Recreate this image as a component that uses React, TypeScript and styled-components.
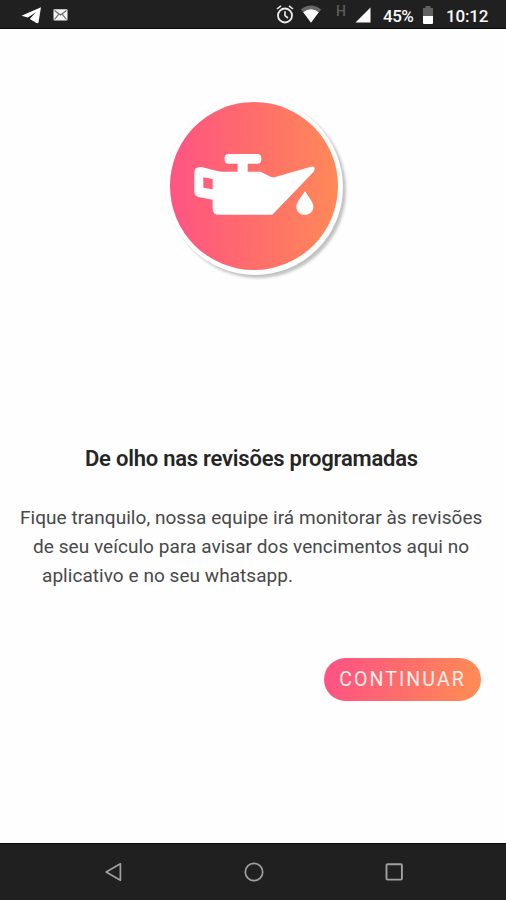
import React from "react";
import styled, { createGlobalStyle } from "styled-components";

const GlobalStyle = createGlobalStyle`
  * { box-sizing: border-box; }
  body { margin: 0; background: #fefefe; font-family: Roboto, "Liberation Sans", sans-serif; }
`;

const Screen = styled.div`
  display: flex;
  flex-direction: column;
  width: 506px;
  height: 900px;
  overflow: hidden;
  background: #fefefe;
`;

const StatusBar = styled.header`
  display: flex;
  flex: none;
  align-items: flex-start;
  justify-content: space-between;
  height: 29px;
  padding: 0 17px 0 21px;
  background: #202020;
  border-bottom: 1px solid #0b0b0b;
  color: #fafafa;
`;

const StatusGroup = styled.div`
  display: flex;
  align-items: flex-start;
`;

const StatusIcon = styled.svg<{ $left?: number }>`
  display: block;
  flex: none;
  margin-left: ${({ $left = 0 }) => $left}px;
`;

const StatusText = styled.span<{ $left: number; $width: number; $spacing?: number }>`
  width: ${({ $width }) => $width}px;
  margin-left: ${({ $left }) => $left}px;
  padding-top: 5px;
  font-size: 17px;
  font-weight: 500;
  line-height: 22px;
  letter-spacing: ${({ $spacing = 0 }) => $spacing}px;
  white-space: nowrap;
`;

const NetworkType = styled.span`
  width: 10px;
  margin-left: 14px;
  padding-top: 3px;
  font-size: 14px;
  font-weight: 500;
  line-height: 16px;
  color: #5c5c5c;
`;

const Content = styled.main`
  display: flex;
  flex: 1;
  flex-direction: column;
  align-items: center;
`;

const Badge = styled.div`
  width: 176px;
  height: 176px;
  margin: 69px 0 0 2px;
  padding: 4px;
  border-radius: 50%;
  background: #fff;
  box-shadow: 1px 1px 0 #fff, 4px 4px 3px rgba(0, 0, 0, 0.24), 0 0 3px rgba(0, 0, 0, 0.05);
`;

const BadgeFace = styled.div`
  width: 168px;
  height: 168px;
  border-radius: 50%;
  background: linear-gradient(90deg, #ff5484 0%, #ff6d6b 50%, #ff8957 100%);
`;

const Title = styled.h1`
  width: 333px;
  margin: 170px 0 0 -3px;
  font-size: 22px;
  font-weight: 600;
  line-height: 30px;
  letter-spacing: -0.23px;
  color: #252525;
  white-space: nowrap;
`;

const Message = styled.p`
  align-self: stretch;
  margin: 29px 0 0;
  font-size: 19px;
  line-height: 29px;
  color: #484848;
  white-space: nowrap;
`;

const Line = styled.span<{ $indent: number; $spacing?: number }>`
  display: block;
  padding-left: ${({ $indent }) => $indent}px;
  letter-spacing: ${({ $spacing = 0.05 }) => $spacing}px;
`;

const ContinueButton = styled.button`
  align-self: flex-end;
  width: 157px;
  height: 43px;
  margin: 68px 25px 0 0;
  padding: 0;
  border: 0;
  border-radius: 22px;
  background: linear-gradient(100deg, #ff5484 5%, #ff6d6b 50%, #ff8957 92%);
  color: #fff0ec;
  font: 400 19.5px/43px Roboto, "Liberation Sans", sans-serif;
  letter-spacing: 2.1px;
  white-space: nowrap;
`;

const NavigationBar = styled.nav`
  display: flex;
  flex: none;
  align-items: center;
  justify-content: space-between;
  height: 57px;
  padding: 0 101px 0 102px;
  background: #202020;
  border-top: 1px solid #080808;
`;

const NavButton = styled.button`
  display: block;
  width: 22px;
  height: 22px;
  padding: 0;
  border: 0;
  background: none;
  color: #a0a0a0;
`;

function OilCan() {
  return (
    <svg width="168" height="168" viewBox="0 0 504 504" fill="#fff" aria-hidden="true">
      <path
        fillRule="evenodd"
        d="M176 156H262Q274 156 274 168V173Q274 185 262 185H233V209H272L302 224Q309 227 316 225L423 194Q437 191 433 204L431 209L307 338H146Q128 338 128 320V293L88 286Q73 283 73 268V214Q73 193 94 195L142 207Q150 209 158 209H203V185H176Q164 185 164 173V168Q164 156 176 156ZM100 226V257L128 262V231Z"
      />
      <path d="M405 267C414 283 430 299 430 314C430 346 379 346 379 314C379 299 396 283 405 267Z" />
    </svg>
  );
}

export default function App() {
  return (
    <>
      <GlobalStyle />
      <Screen>
        <StatusBar>
          <StatusGroup>
            <StatusIcon width="22" height="28" viewBox="0 0 22 28" fill="#fff">
              <path d="M0.5 15.7L20 7.3L17.5 22.2Q17 24 15 22.8L8.8 18.9L14.6 12.4L6.8 17.6Z" />
            </StatusIcon>
            <StatusIcon $left={10} width="15" height="28" viewBox="0 0 15 28">
              <rect x="0.5" y="9.3" width="14" height="11.2" rx="1" fill="#f3f3f3" />
              <path d="M1.5 10.5L7.5 15L13.5 10.5M1.5 19.5L5.8 14.2M13.5 19.5L9.2 14.2" fill="none" stroke="#666" strokeWidth="1.1" />
            </StatusIcon>
          </StatusGroup>
          <StatusGroup>
            <StatusIcon width="18" height="28" viewBox="0 0 18 28" fill="none" stroke="#eee" strokeWidth="1.8">
              <circle cx="9" cy="15.5" r="7" />
              <path d="M1 9L5 5.8M17 9L13 5.8M9 11.2V15.7L12 18" strokeWidth="1.6" />
            </StatusIcon>
            <StatusIcon $left={6} width="22" height="28" viewBox="0 0 22 28">
              <path d="M.8 9.4Q11 1.5 21.2 9.4L17.7 13.5Q11 8.2 4.3 13.5Z" fill="#686868" />
              <path d="M3.2 12.2Q11 6.2 18.8 12.2L11 22.8Z" fill="#fff" />
            </StatusIcon>
            <NetworkType>H</NetworkType>
            <StatusIcon $left={9} width="16" height="28" viewBox="0 0 16 28" fill="#fafafa">
              <path d="M.5 22.5L15.5 7.5V22.5Z" />
            </StatusIcon>
            <StatusText $left={12} $width={31} $spacing={-0.5}>45%</StatusText>
            <StatusIcon $left={8} width="12" height="28" viewBox="0 0 12 28">
              <path d="M1 8H3.5V6H8.5V8H11V16H1Z" fill="#626262" />
              <path d="M1 16H11V23Q11 24 10 24H2Q1 24 1 23Z" fill="#fff" />
            </StatusIcon>
            <StatusText $left={12} $width={43} $spacing={-0.2}>10:12</StatusText>
          </StatusGroup>
        </StatusBar>
        <Content>
          <Badge>
            <BadgeFace>
              <OilCan />
            </BadgeFace>
          </Badge>
          <Title>De olho nas revisões programadas</Title>
          <Message>
            <Line $indent={20}>Fique tranquilo, nossa equipe irá monitorar às revisões</Line>
            <Line $indent={33}>de seu veículo para avisar dos vencimentos aqui no</Line>
            <Line $indent={42}>aplicativo e no seu whatsapp.</Line>
          </Message>
          <ContinueButton>CONTINUAR</ContinueButton>
        </Content>
        <NavigationBar>
          <NavButton aria-label="Voltar">
            <svg width="22" height="22" viewBox="0 0 22 22" fill="none" stroke="currentColor" strokeWidth="1.7" strokeLinejoin="round">
              <path d="M4.2 11L18.4 2.8V19.2Z" />
            </svg>
          </NavButton>
          <NavButton aria-label="Início">
            <svg width="22" height="22" viewBox="0 0 22 22" fill="none" stroke="currentColor" strokeWidth="1.7">
              <circle cx="11" cy="11" r="8.7" />
            </svg>
          </NavButton>
          <NavButton aria-label="Recentes">
            <svg width="22" height="22" viewBox="0 0 22 22" fill="none" stroke="currentColor" strokeWidth="1.9">
              <rect x="3.5" y="3.2" width="15.4" height="15.4" rx="1" />
            </svg>
          </NavButton>
        </NavigationBar>
      </Screen>
    </>
  );
}
